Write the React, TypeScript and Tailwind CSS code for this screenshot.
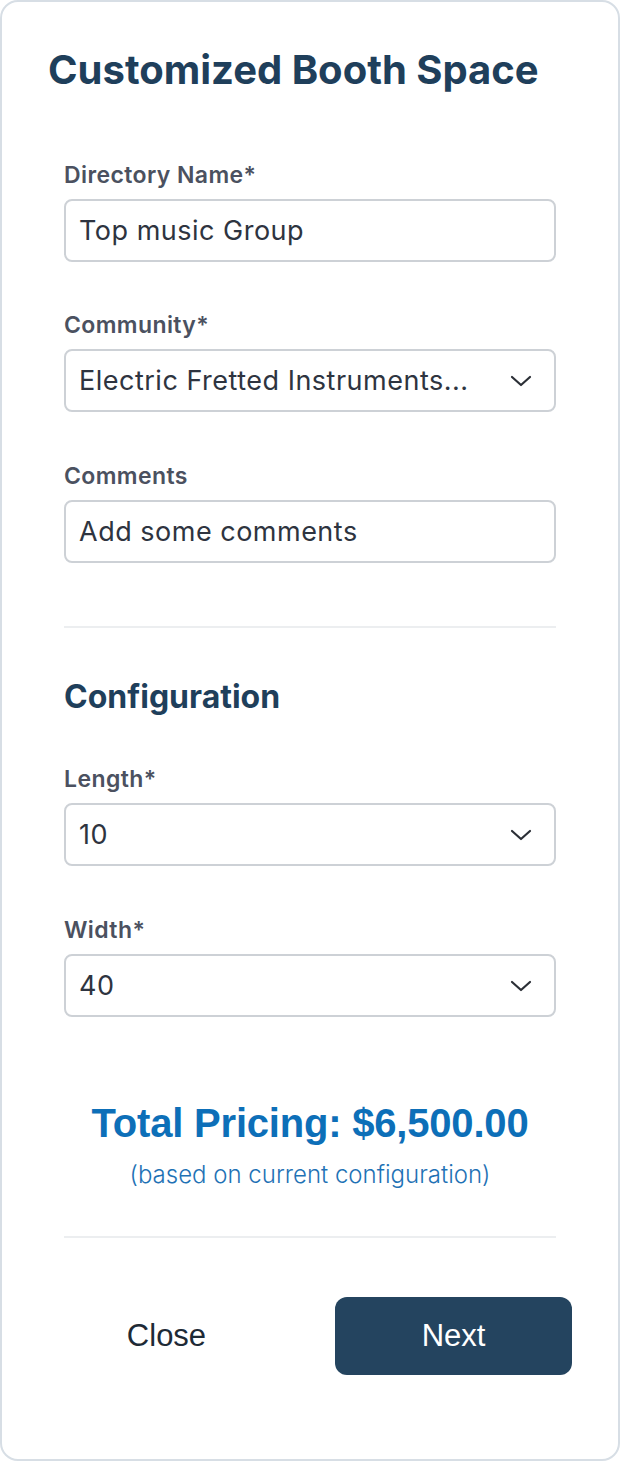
import React from "react";

const Chevron = () => (
  <svg width="22" height="12" viewBox="0 0 22 12" fill="none" className="shrink-0">
    <path d="M2 2 L11 10 L20 2" stroke="#2b2f36" strokeWidth="2.2" strokeLinecap="round" strokeLinejoin="round" />
  </svg>
);

const Label = ({ children, className = "" }: { children: React.ReactNode; className?: string }) => (
  <div className={`text-[23px] leading-[28px] font-semibold text-[#4b5160] tracking-[0.4px] ${className}`}>{children}</div>
);

const Field = ({ value, select = false }: { value: string; select?: boolean }) => (
  <div className="mt-[10px] h-[63px] rounded-[8px] border-2 border-[#cdd1d6] bg-white flex items-center justify-between pl-[13px] pr-[22px]">
    <span className="pt-[2px] text-[27px] text-[#2e3440] tracking-[0.5px]">{value}</span>
    {select && <Chevron />}
  </div>
);

export default function App() {
  return (
    <div className="w-[620px] h-[1461px] bg-white" style={{ fontFamily: "Inter, 'Noto Sans', sans-serif" }}>
      <div className="h-full rounded-[18px] border-2 border-[#d7dee5] bg-white flex flex-col">
        <h1 className="mt-[46px] ml-[46px] text-[40px] leading-[44px] font-bold text-[#1f3f5b]">
          Customized Booth Space
        </h1>
        <div className="px-[62px] flex flex-col">
          <Label className="mt-[69px]">Directory Name*</Label>
          <Field value="Top music Group" />
          <Label className="mt-[49px]">Community*</Label>
          <Field value="Electric Fretted Instruments..." select />
          <Label className="mt-[50px]">Comments</Label>
          <Field value="Add some comments" />
          <div className="mt-[63px] h-[2px] bg-[#eceef0]" />
          <h2 className="mt-[51px] text-[32px] leading-[36px] font-bold text-[#1f3f5b]">Configuration</h2>
          <Label className="mt-[50px]">Length*</Label>
          <Field value="10" select />
          <Label className="mt-[50px]">Width*</Label>
          <Field value="40" select />
          <div
            className="mt-[82px] text-center text-[40px] leading-[48px] font-bold text-[#0d6fb8] tracking-[-0.2px]"
            style={{ fontFamily: "'Liberation Sans', Arial, sans-serif" }}
          >
            Total Pricing: $6,500.00
          </div>
          <div className="mt-[14px] text-center text-[24px] leading-[28px] font-light text-[#1f72b5]">
            (based on current configuration)
          </div>
          <div className="mt-[47px] h-[2px] bg-[#eceef0]" />
        </div>
        <div
          className="mt-[59px] px-[46px] grid grid-cols-2 gap-[50px]"
          style={{ fontFamily: "'Liberation Sans', Arial, sans-serif" }}
        >
          <button className="h-[78px] text-[31px] text-[#1e2a36]">Close</button>
          <button className="h-[78px] rounded-[12px] bg-[#24445f] text-[31px] text-white">Next</button>
        </div>
      </div>
    </div>
  );
}
